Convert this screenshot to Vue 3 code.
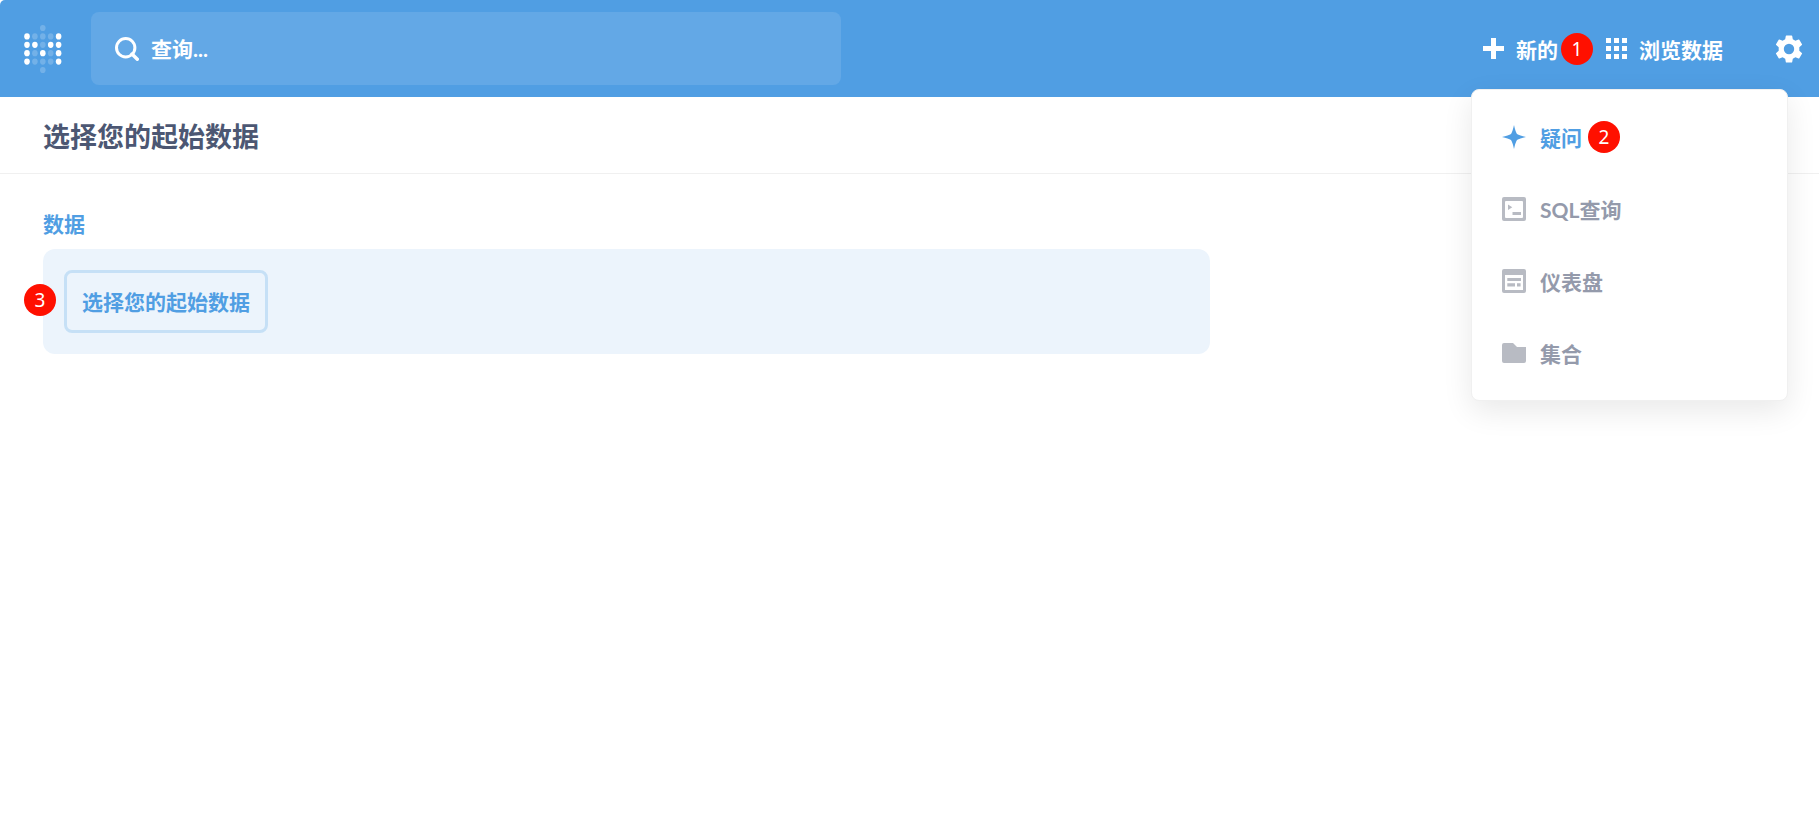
<template>
  <div class="page">
    <header class="nav-bar">
      <a class="logo" href="#" aria-label="Metabase">
        <svg width="40" height="50" viewBox="0 0 40 50">
          <ellipse
            v-for="(dot, i) in dots"
            :key="i"
            :cx="dot.x"
            :cy="dot.y"
            rx="2.8"
            ry="3.1"
            fill="#fff"
            :fill-opacity="dot.on ? 1 : 0.2"
          />
        </svg>
      </a>

      <label class="search">
        <svg width="24" height="24" viewBox="0 0 24 24" fill="none" stroke="#fff">
          <circle cx="10.7" cy="10.7" r="9.2" stroke-width="3" />
          <path d="M17 17l5.3 5.3" stroke-width="3.4" stroke-linecap="round" />
        </svg>
        <input v-model="keyword" type="text" placeholder="查询..." aria-label="查询" />
      </label>

      <nav class="actions">
        <button class="action" type="button" @click="menuOpen = !menuOpen">
          <svg width="21" height="21" viewBox="0 0 21 21" fill="#fff">
            <path d="M8 0h5v8h8v5h-8v8H8v-8H0V8h8z" />
          </svg>
          新的
          <span class="badge badge-new">1</span>
        </button>
        <a class="action" href="#">
          <svg width="21" height="21" viewBox="0 0 21 21" fill="#fff">
            <path
              d="M0 0h5v5H0zM8 0h5v5H8zM16 0h5v5h-5zM0 8h5v5H0zM8 8h5v5H8zM16 8h5v5h-5zM0 16h5v5H0zM8 16h5v5H8zM16 16h5v5h-5z"
            />
          </svg>
          浏览数据
        </a>
        <button class="action settings" type="button" aria-label="设置">
          <svg width="28" height="28" viewBox="0 0 28 28" fill="#fff" fill-rule="evenodd">
            <path
              d="M10.8 .9Q10.9 .4 11.4 .4H16.6Q17.1 .4 17.2 .9L17.8 4.2L20.4 5.7L23.5 4.5Q24 4.3 24.3 4.8L27 9.3Q27.2 9.8 26.8 10.1L24.3 12.2V15.8L26.8 17.9Q27.2 18.2 27 18.7L24.3 23.2Q24 23.7 23.5 23.5L20.4 22.3L17.8 23.8L17.2 27.1Q17.1 27.6 16.6 27.6H11.4Q10.9 27.6 10.8 27.1L10.2 23.8L7.6 22.3L4.5 23.5Q4 23.7 3.7 23.2L1 18.7Q.8 18.2 1.2 17.9L3.7 15.8V12.2L1.2 10.1Q.8 9.8 1 9.3L3.7 4.8Q4 4.3 4.5 4.5L7.6 5.7L10.2 4.2ZM14 8.8A5.2 5.2 0 1 0 14 19.2A5.2 5.2 0 1 0 14 8.8Z"
            />
          </svg>
        </button>
      </nav>

      <ul v-if="menuOpen" class="menu">
        <li v-for="item in menu" :key="item.label">
          <a href="#" class="menu-item" :class="{ active: item.badge }">
            <svg width="24" height="24" viewBox="0 0 24 24" fill="currentColor" fill-rule="evenodd">
              <path :d="item.icon" />
            </svg>
            <span>{{ item.label }}</span>
            <span v-if="item.badge" class="badge">{{ item.badge }}</span>
          </a>
        </li>
      </ul>
    </header>

    <div class="title-bar">
      <h1>选择您的起始数据</h1>
    </div>

    <main class="notebook">
      <h2>数据</h2>
      <div class="step">
        <span class="badge badge-step">3</span>
        <button class="picker" type="button">选择您的起始数据</button>
      </div>
    </main>
  </div>
</template>

<script setup>
import { ref } from 'vue'

const keyword = ref('')
const menuOpen = ref(true)

// 1 = 亮点, 0 = 暗点, 空格 = 无
const rows = ['  0  ', '10001', '11011', '10101', '10001', '  0  ']
const dots = rows.flatMap((row, r) =>
  [...row]
    .map((c, i) => ({ x: 4 + i * 7.9, y: 4 + r * 8.4, on: c === '1', empty: c === ' ' }))
    .filter((d) => !d.empty)
)

const menu = [
  {
    label: '疑问',
    badge: 2,
    icon: 'M12 0Q13.4 6.5 15 9Q17.5 10.6 24 12Q17.5 13.4 15 15Q13.4 17.5 12 24Q10.6 17.5 9 15Q6.5 13.4 0 12Q6.5 10.6 9 9Q10.6 6.5 12 0Z',
  },
  {
    label: 'SQL查询',
    icon: 'M2 0H22Q24 0 24 2V22Q24 24 22 24H2Q0 24 0 22V2Q0 0 2 0ZM4 4Q3 4 3 5V20Q3 21 4 21H20Q21 21 21 20V5Q21 4 20 4ZM6 7.5L10.3 10.3L6 13ZM10.5 15H19V18H10.5Z',
  },
  {
    label: '仪表盘',
    icon: 'M2 0H22Q24 0 24 2V22Q24 24 22 24H2Q0 24 0 22V2Q0 0 2 0ZM3 6V21H21V6ZM5.3 9H19V12H5.3ZM5.3 14.3H13V17.6H5.3ZM15 14.3H18.6V17.6H15Z',
  },
  {
    label: '集合',
    icon: 'M2 2H11L15 6H24V20Q24 22 22 22H2Q0 22 0 20V4Q0 2 2 2Z',
  },
]
</script>

<style>
body {
  margin: 0;
  background: #fff;
}
</style>

<style scoped>
.page {
  min-height: 100vh;
  font-family: Lato, 'Noto Sans CJK SC', sans-serif;
  font-size: 21px;
  font-weight: 700;
  color: #4c5773;
}

button,
input {
  font: inherit;
}

a {
  color: inherit;
  text-decoration: none;
}

svg {
  display: block;
  flex: none;
}

.nav-bar {
  position: relative;
  display: flex;
  align-items: center;
  box-sizing: border-box;
  height: 97px;
  padding: 0 16px 0 23px;
  border-top-left-radius: 5px;
  background: #509ee3;
  color: #fff;
}

.logo {
  margin-right: 28px;
}

.search {
  display: flex;
  flex: 1;
  align-items: center;
  gap: 12px;
  box-sizing: border-box;
  max-width: 750px;
  height: 73px;
  padding: 0 24px;
  border-radius: 8px;
  background: #63a8e6;
}

.search input {
  flex: 1;
  min-width: 0;
  padding: 0;
  border: none;
  outline: none;
  background: transparent;
  color: #fff;
}

.search input::placeholder {
  color: #fff;
  opacity: 1;
}

.actions {
  display: flex;
  align-items: center;
  gap: 48px;
  margin-left: auto;
}

.action {
  position: relative;
  display: flex;
  align-items: center;
  gap: 12px;
  padding: 0;
  border: none;
  background: transparent;
  color: #fff;
  white-space: nowrap;
  cursor: pointer;
}

.settings {
  margin-left: 4px;
}

.badge {
  display: flex;
  align-items: center;
  justify-content: center;
  width: 32px;
  height: 32px;
  border-radius: 50%;
  background: #ff1000;
  color: #fff;
  font-family: 'Noto Sans', sans-serif;
  font-size: 19px;
  font-weight: 400;
  line-height: 32px;
}

.badge-new {
  position: absolute;
  left: 100%;
  margin-left: 3px;
}

.menu {
  position: absolute;
  top: 89px;
  right: 31px;
  z-index: 2;
  box-sizing: border-box;
  width: 317px;
  margin: 0;
  padding: 11px 0;
  border: 1px solid #f0f0f0;
  border-radius: 8px;
  background: #fff;
  box-shadow: 0 10px 30px rgba(0, 0, 0, 0.09);
  list-style: none;
}

.menu-item {
  display: flex;
  align-items: center;
  height: 72px;
  padding: 0 30px;
  color: #949aab;
}

.menu-item svg {
  margin-right: 14px;
  color: #b8bbc3;
}

.menu-item .badge {
  margin-left: 6px;
}

.menu-item.active,
.menu-item.active svg {
  color: #509ee3;
}

.title-bar {
  padding: 22px 43px 18px;
  border-bottom: 1px solid #f0f0f0;
}

h1 {
  margin: 0;
  font-size: 27px;
  line-height: 36px;
}

.notebook {
  padding: 35px 43px;
}

h2 {
  margin: 0 0 10px;
  color: #509ee3;
  font-size: 21px;
  line-height: 30px;
}

.step {
  position: relative;
  display: flex;
  box-sizing: border-box;
  width: calc((100% + 18px) * 2 / 3);
  padding: 21px;
  border-radius: 12px;
  background: #ecf4fc;
}

.badge-step {
  position: absolute;
  top: 35px;
  left: -19px;
}

.picker {
  height: 63px;
  padding: 0 15px 2px;
  border: 3px solid #c6e0f6;
  border-radius: 8px;
  background: transparent;
  color: #509ee3;
  cursor: pointer;
}
</style>
